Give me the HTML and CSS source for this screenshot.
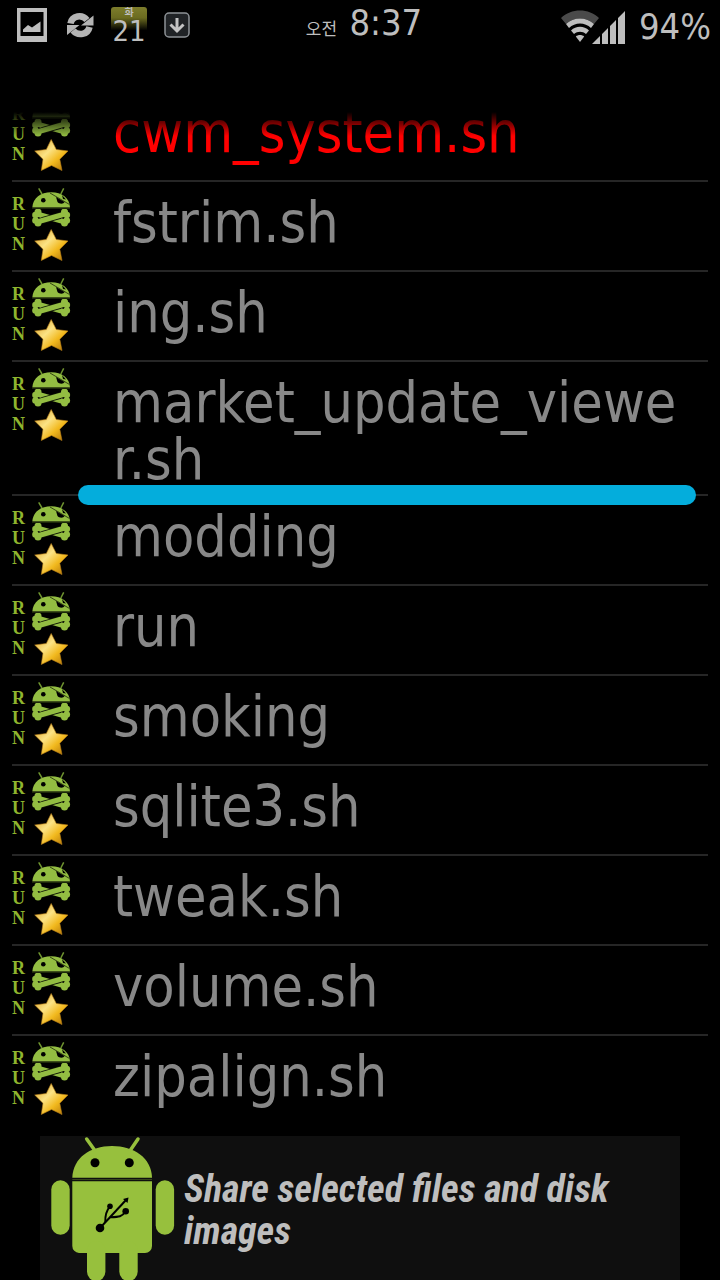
FILE: index.html
```
<!DOCTYPE html>
<html lang="en">
<head>
    <meta charset="UTF-8">
    <meta name="viewport" content="width=device-width, initial-scale=1.0">
    <title>Scripts</title>
    <link rel="stylesheet" href="styles.css">
</head>
<body>
    <svg class="sprite" aria-hidden="true">
        <defs>
            <linearGradient id="gold" x1="0" y1="0" x2="1" y2="1">
                <stop offset="0" stop-color="#d99a18"/>
                <stop offset="0.4" stop-color="#fbe284"/>
                <stop offset="0.65" stop-color="#f2b91e"/>
                <stop offset="1" stop-color="#a86a05"/>
            </linearGradient>
            <symbol id="pirate" viewBox="0 0 40 76">
                <!-- antennae, head, eye patch -->
                <path d="M7.7 1.3 11 7M32.7 1.3 29.8 7" stroke="#6f9430" stroke-width="1.5"/>
                <path d="M1.3 20.4C2 11 9.5 5.3 20.2 5.3S38.500 11 39 20.4Z" fill="#93bd42"/>
                <circle cx="12.3" cy="13.3" r="2.300" fill="#000"/>
                <path d="M19 6 38.500 17.500" stroke="#2a380f" stroke-width="0.900"/>
                <path d="M25 10 33.500 15C32.500 17.500 28 17 26.500 15Z" fill="#000"/>
                <path d="M31 8 35 12.500 32 12Z" fill="#000"/>
                <!-- crossed bones -->
                <g fill="#93bd42" stroke="#93bd42">
                    <path d="M6 27 34 35" stroke-width="5"/>
                    <g stroke="none">
                        <circle cx="7" cy="25" r="3.500"/>
                        <circle cx="4.500" cy="28" r="3.300"/>
                        <circle cx="33.500" cy="36" r="3.500"/>
                        <circle cx="35.800" cy="33.500" r="3.300"/>
                    </g>
                </g>
                <path d="M11 33.500 29.500 28.500" stroke="#0c1204" stroke-width="6.800"/>
                <g fill="#93bd42" stroke="#93bd42">
                    <path d="M6 35 34 27" stroke-width="5"/>
                    <g stroke="none">
                        <circle cx="33.500" cy="25" r="3.500"/>
                        <circle cx="35.800" cy="28" r="3.300"/>
                        <circle cx="7" cy="36" r="3.500"/>
                        <circle cx="4.500" cy="33.500" r="3.300"/>
                    </g>
                </g>
                <path d="M1 21.300H39" stroke="#1c270a" stroke-width="1.200"/>
                <!-- star -->
                <path d="M20.2 42.5 25.3 52.5 37 54 28.8 62.3 31 73.5 20.5 68.5 10.3 73.5 12 62.3 3.7 54 15.3 52.5Z" fill="url(#gold)" stroke="#b87f18" stroke-width="0.600" stroke-linejoin="round"/>
            </symbol>
        </defs>
    </svg>

    <header class="status-bar">
        <div class="status-left">
            <svg width="30" height="34" viewBox="0 0 30 34">
                <path d="M0 0H30V34H0ZM3.500 4V28H26.500V4Z" fill="#bebebe" fill-rule="evenodd"/>
                <path d="M6 24V21.500L11 17 15 19.500 23.500 13.500V24Z" fill="#bebebe"/>
            </svg>
            <svg width="30" height="30" viewBox="0 0 30 30">
                <g fill="none" stroke="#b4b4b4" stroke-width="6.500">
                    <path d="M6.500 13.500C8 5.500 18 4 23 10"/>
                    <path d="M25.500 17C24 24.500 14 26.500 9 20.500"/>
                </g>
                <path d="M29.500 5.500V15.500H17ZM3 25V15H15.500Z" fill="#b4b4b4"/>
            </svg>
            <div class="calendar">
                <span class="weekday" lang="ko">화</span>
                <span class="day">21</span>
            </div>
            <svg width="26" height="26" viewBox="0 0 26 26">
                <rect x="1" y="1" width="24" height="24" rx="4" fill="#202326" stroke="#8d9296" stroke-width="1.500"/>
                <path d="M13 6V18M6.500 12.500 13 19 19.500 12.500" fill="none" stroke="#c4c4c4" stroke-width="3"/>
            </svg>
        </div>
        <div class="clock"><span class="ampm" lang="ko">오전</span> 8:37</div>
        <div class="status-right">
            <svg width="66" height="34" viewBox="0 0 66 34">
                <path d="M0 8C10-2 28-2 38 8L33 14C26 6.500 12 6.500 5 14Z" fill="#4a4a4a"/>
                <path d="M5 14C12 6.500 26 6.500 33 14L30 18C24 12 14 12 8 18Z" fill="#bebebe"/>
                <path d="M10 20.500C15 15.500 23 15.500 28 20.500L25 24C21.500 21 16.500 21 13 24Z" fill="#bebebe"/>
                <path d="M14.800 26.500C17 24.500 21 24.500 23.200 26.500L19 32Z" fill="#bebebe"/>
                <path d="M31 34 39 26V34ZM41 34V24L47 18V34ZM49 34V16L55 10V34ZM57 34V8L64 1V34Z" fill="#bebebe"/>
            </svg>
            <span class="battery">94%</span>
        </div>
    </header>

    <main class="scripts">
        <ul class="script-list">
            <li class="script active">
                <span class="run">R<br>U<br>N</span>
                <svg class="badge"><use href="#pirate"/></svg>
                <span class="name">cwm_system.sh</span>
            </li>
            <li class="script">
                <span class="run">R<br>U<br>N</span>
                <svg class="badge"><use href="#pirate"/></svg>
                <span class="name">fstrim.sh</span>
            </li>
            <li class="script">
                <span class="run">R<br>U<br>N</span>
                <svg class="badge"><use href="#pirate"/></svg>
                <span class="name">ing.sh</span>
            </li>
            <li class="script marked">
                <span class="run">R<br>U<br>N</span>
                <svg class="badge"><use href="#pirate"/></svg>
                <span class="name">market_update_viewer.sh</span>
            </li>
            <li class="script">
                <span class="run">R<br>U<br>N</span>
                <svg class="badge"><use href="#pirate"/></svg>
                <span class="name">modding</span>
            </li>
            <li class="script">
                <span class="run">R<br>U<br>N</span>
                <svg class="badge"><use href="#pirate"/></svg>
                <span class="name">run</span>
            </li>
            <li class="script">
                <span class="run">R<br>U<br>N</span>
                <svg class="badge"><use href="#pirate"/></svg>
                <span class="name">smoking</span>
            </li>
            <li class="script">
                <span class="run">R<br>U<br>N</span>
                <svg class="badge"><use href="#pirate"/></svg>
                <span class="name">sqlite3.sh</span>
            </li>
            <li class="script">
                <span class="run">R<br>U<br>N</span>
                <svg class="badge"><use href="#pirate"/></svg>
                <span class="name">tweak.sh</span>
            </li>
            <li class="script">
                <span class="run">R<br>U<br>N</span>
                <svg class="badge"><use href="#pirate"/></svg>
                <span class="name">volume.sh</span>
            </li>
            <li class="script">
                <span class="run">R<br>U<br>N</span>
                <svg class="badge"><use href="#pirate"/></svg>
                <span class="name">zipalign.sh</span>
            </li>
        </ul>
    </main>

    <a class="banner" href="#">
        <svg class="robot" width="125" height="144" viewBox="0 0 125 144">
            <g fill="#97c03d">
                <path d="M22.3 41.7C23 22 40 10 62 10S101.500 22 102 41.7Z"/>
                <path d="M22.3 45.3H102V110A7 7 0 0 1 95 117H29A7 7 0 0 1 22.3 110Z"/>
                <rect x="1.3" y="44.3" width="18.4" height="54.4" rx="9.2"/>
                <rect x="105.7" y="44.3" width="18.4" height="54.4" rx="9.2"/>
                <rect x="37" y="105" width="18.4" height="40" rx="9.2"/>
                <rect x="69.3" y="105" width="18.4" height="40" rx="9.2"/>
            </g>
            <path d="M36.7 3 44.5 14M88 3 80.5 14" stroke="#97c03d" stroke-width="3.500" stroke-linecap="round"/>
            <path d="M22.3 43.500H102" stroke="#35451a" stroke-width="1"/>
            <circle cx="45" cy="26.7" r="4.500"/>
            <circle cx="79.3" cy="26.7" r="4.500"/>
            <!-- usb trident -->
            <g fill="none" stroke="#000" stroke-width="2">
                <path d="M50 92 76 64"/>
                <path d="M60 70.3C56 75 55 79 55.3 86"/>
                <path d="M75.7 75.3C72 81 69 81 60 81.3"/>
            </g>
            <path d="M78.500 61.500 77.500 67 73 63Z"/>
            <circle cx="50" cy="92" r="4.300"/>
            <circle cx="60" cy="70.3" r="2.800"/>
            <circle cx="75.7" cy="75.3" r="3.300"/>
        </svg>
        <span class="banner-text">Share selected files and disk images</span>
    </a>
</body>
</html>
```
FILE: styles.css
```
* {
    box-sizing: border-box;
}

body {
    margin: 0;
    height: 100vh;
    display: flex;
    flex-direction: column;
    background: #000;
    color: #bebebe;
    font-family: 'DejaVu Sans Condensed', 'DejaVu Sans', 'Noto Sans CJK KR', sans-serif;
    overflow: hidden;
}

.sprite {
    position: absolute;
    width: 0;
    height: 0;
}

/* Status bar */
.status-bar {
    display: grid;
    grid-template-columns: 1fr auto 1fr;
    align-items: start;
    height: 54px;
    margin-bottom: 58px;
    padding: 0 9px 0 17px;
    font-size: 36px;
    flex-shrink: 0;
}

.status-left {
    display: flex;
    align-items: center;
    gap: 17px;
    height: 50px;
}

.calendar {
    display: flex;
    flex-direction: column;
    align-items: center;
    width: 36px;
    height: 36px;
    border-radius: 3px;
    background: linear-gradient(#7d7d2c, #6b6b20 30%, #000 65%);
}

.weekday {
    font-family: 'Noto Sans CJK KR', sans-serif;
    font-size: 10px;
    font-weight: bold;
    line-height: 10px;
}

.day {
    font-size: 29px;
    line-height: 29px;
}

.clock {
    line-height: 46px;
    white-space: nowrap;
}

.ampm {
    margin-right: 2px;
    font-family: 'Noto Sans CJK KR', sans-serif;
    font-size: 17px;
    line-height: 20px;
}

.status-right {
    display: flex;
    align-items: center;
    justify-content: flex-end;
    gap: 12px;
}

.battery {
    line-height: 54px;
}

/* Script list, scrolled part way past its first row */
.scripts {
    position: relative;
    flex: 1;
    min-height: 0;
    padding: 0 12px;
    overflow: hidden;
}

.scripts::before {
    content: "";
    position: absolute;
    z-index: 1;
    top: 0;
    left: 0;
    right: 0;
    height: 24px;
    background: linear-gradient(#000, transparent);
}

.script-list {
    list-style: none;
    margin: -20px 0 0;
    padding: 0;
}

.script {
    position: relative;
    display: flex;
    align-items: flex-start;
    min-height: 90px;
    border-bottom: 2px solid #262626;
    color: #888;
}

.script:last-child {
    border-bottom: none;
}

.script.active {
    color: #f00;
}

.run {
    width: 19px;
    padding-top: 12px;
    color: #8fb52e;
    font-family: 'Liberation Serif', serif;
    font-size: 18px;
    font-weight: bold;
    line-height: 20px;
}

.badge {
    width: 40px;
    height: 76px;
    margin-top: 5px;
    flex-shrink: 0;
}

.name {
    flex: 1;
    padding: 12px 12px 6px 42px;
    font-size: 57px;
    line-height: 57px;
    word-break: break-all;
}

/* Marker lying over the divider */
.script.marked::after {
    content: "";
    position: absolute;
    z-index: 1;
    left: 66px;
    right: 12px;
    bottom: -11px;
    height: 20px;
    border-radius: 10px;
    background: #04addc;
}

/* Banner */
.banner {
    display: flex;
    align-items: center;
    gap: 9px;
    height: 144px;
    margin: 0 40px;
    padding: 0 10px;
    background: #0f0f0f;
    color: #bebebe;
    text-decoration: none;
    flex-shrink: 0;
}

.robot {
    flex-shrink: 0;
}

.banner-text {
    padding-top: 3px;
    font-family: 'Roboto Condensed', Roboto, sans-serif;
    font-size: 38px;
    font-style: italic;
    font-weight: bold;
    line-height: 42px;
}
```
